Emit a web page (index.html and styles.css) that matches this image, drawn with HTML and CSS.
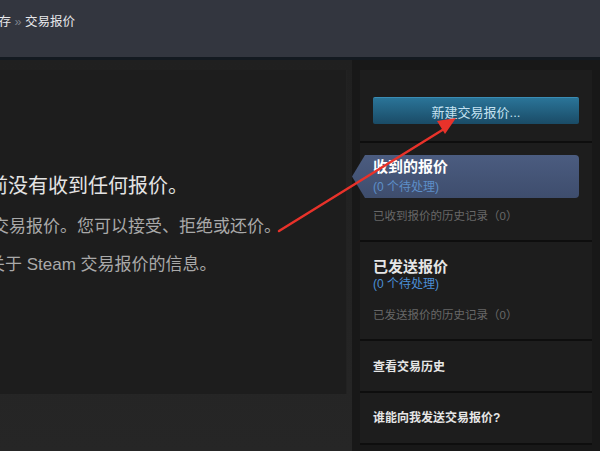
FILE: index.html
```html
<!DOCTYPE html>
<html lang="zh-CN">
<head>
  <meta charset="UTF-8">
  <title>交易报价</title>
  <link rel="stylesheet" href="styles.css">
</head>
<body>

  <div class="header">
    <div class="crumbs">库存 <span class="sep">»</span> 交易报价</div>
  </div>

  <div class="main">
    <div class="left">
      <div class="panel">
        <div class="intro">
          <h1>您目前没有收到任何报价。</h1>
          <p class="desc">收到交易报价。您可以接受、拒绝或还价。</p>
          <p class="more">了解关于 Steam 交易报价的信息。</p>
        </div>
      </div>
    </div>

    <div class="sidebar">
      <div class="section top">
        <button class="new-btn">新建交易报价...</button>
      </div>

      <div class="section">
        <div class="tab active">
          <div class="tab-title">收到的报价</div>
          <div class="tab-sub">(0 个待处理)</div>
        </div>
        <div class="history">已收到报价的历史记录（0）</div>
      </div>

      <div class="section">
        <div class="tab">
          <div class="tab-title">已发送报价</div>
          <div class="tab-sub">(0 个待处理)</div>
        </div>
        <div class="history">已发送报价的历史记录（0）</div>
      </div>

      <div class="section link">查看交易历史</div>
      <div class="section link">谁能向我发送交易报价?</div>
    </div>
  </div>

  <!-- annotation arrow drawn over the screenshot -->
  <svg class="arrow" width="600" height="451" viewBox="0 0 600 451">
    <line x1="279" y1="231" x2="444" y2="129" stroke="#e8322a" stroke-width="2.5" stroke-linecap="round"/>
    <polygon points="456,118 437,121 445,134" fill="#e8322a"/>
  </svg>

</body>
</html>
```

FILE: styles.css
```css
* {
  box-sizing: border-box;
}

body {
  margin: 0;
  width: 600px;
  height: 451px;
  overflow: hidden;
  background-color: #1b1b1b;
  font-family: "Liberation Sans", "Noto Sans CJK SC", sans-serif;
  position: relative;
}

.header {
  height: 60px;
  background-color: #33363f;
  border-bottom: 3px solid #141a21;
  padding-top: 13px;
}

.crumbs {
  margin-left: -14px;
  font-size: 12.5px;
  line-height: 18px;
  color: #e8e9ec;
}

.crumbs .sep {
  color: #7d828c;
}

.main {
  display: flex;
  height: 391px;
}

.left {
  width: 352px;
  background: linear-gradient(to bottom, #202020 0%, #262626 100%);
  padding-top: 10px;
  overflow: hidden;
}

.panel {
  width: 347px;
  height: 324px;
  background-color: #1d1d1d;
  border-right: 1px solid #222;
  padding-top: 102px;
}

.intro {
  margin-left: -52px;
  white-space: nowrap;
}

.intro h1 {
  margin: 0;
  font-size: 20px;
  line-height: 28px;
  font-weight: normal;
  color: #e4e4e4;
}

.intro p {
  margin: 0;
  font-size: 17px;
  line-height: 22px;
  color: #a9a9a9;
}

.intro p.desc {
  margin-top: 16px;
  text-indent: 10px;
}

.intro p.more {
  margin-top: 16px;
  text-indent: 6px;
}

.sidebar {
  width: 248px;
  background-color: #181818;
  padding: 10px 8px 0;
}

.section {
  background-color: #1d1d1d;
  border-bottom: 2px solid #0e0e0e;
  padding: 12px 13px 16px;
}

.section.top {
  padding: 27px 13px 17px;
}

.new-btn {
  display: block;
  width: 100%;
  height: 27px;
  border: none;
  border-top: 1px solid #3a8cb4;
  border-radius: 2px;
  background: linear-gradient(to bottom, #2a7498 0%, #1a4b66 100%);
  color: #c4e2f2;
  font-family: inherit;
  font-size: 13px;
  padding: 0;
}

.tab-title {
  font-size: 15px;
  line-height: 18px;
  font-weight: bold;
  color: #e6e6e6;
}

.tab-sub {
  font-size: 12px;
  line-height: 16px;
  color: #4b8fd6;
}

.tab.active {
  margin: 0 0 0 -21px;
  padding: 2px 0 3px 21px;
  background: linear-gradient(to bottom, #4b5c80 0%, #3e4d6d 100%);
  clip-path: polygon(13px 0, 100% 0, 100% 100%, 13px 100%, 0 50%);
  border-radius: 0 4px 4px 0;
}

.tab.active .tab-title {
  line-height: 20px;
  color: #ffffff;
}

.tab.active .tab-sub {
  margin-top: 2px;
  color: #5d8fc9;
}

.section .tab + .history {
  margin-top: 10px;
}

.section:nth-child(3) {
  padding-top: 16px;
}

.section:nth-child(3) .history {
  margin-top: 15px;
}

.history {
  font-size: 11.5px;
  line-height: 16px;
  color: #686868;
}

.section.link {
  font-size: 12px;
  line-height: 16px;
  font-weight: bold;
  color: #e6e6e6;
  padding: 18px 13px 16px;
}

.section.link:last-child {
  padding: 17px 13px 17px;
}

.arrow {
  position: absolute;
  top: 0;
  left: 0;
  pointer-events: none;
}
```
